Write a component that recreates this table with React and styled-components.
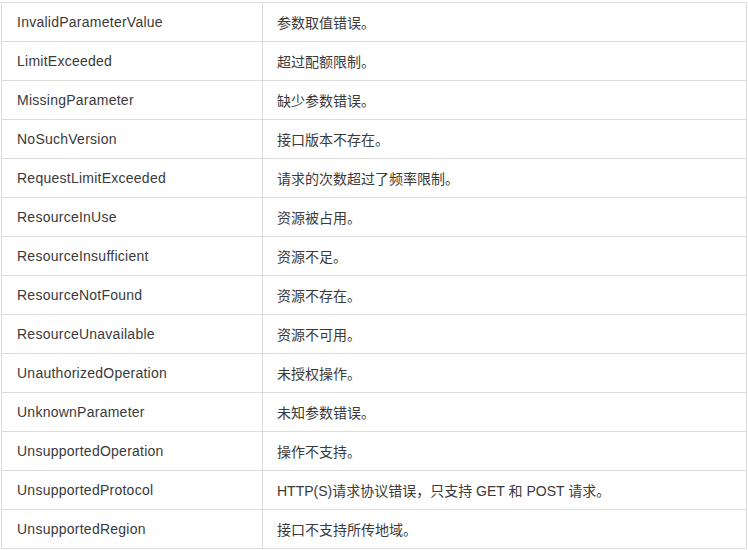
import React from "react";
import styled, { createGlobalStyle } from "styled-components";

const rows = [
  ["InvalidParameterValue", "参数取值错误。"],
  ["LimitExceeded", "超过配额限制。"],
  ["MissingParameter", "缺少参数错误。"],
  ["NoSuchVersion", "接口版本不存在。"],
  ["RequestLimitExceeded", "请求的次数超过了频率限制。"],
  ["ResourceInUse", "资源被占用。"],
  ["ResourceInsufficient", "资源不足。"],
  ["ResourceNotFound", "资源不存在。"],
  ["ResourceUnavailable", "资源不可用。"],
  ["UnauthorizedOperation", "未授权操作。"],
  ["UnknownParameter", "未知参数错误。"],
  ["UnsupportedOperation", "操作不支持。"],
  ["UnsupportedProtocol", "HTTP(S)请求协议错误，只支持 GET 和 POST 请求。"],
  ["UnsupportedRegion", "接口不支持所传地域。"],
];

const GlobalStyle = createGlobalStyle`
  body {
    margin: 0;
    background: #fff;
    font-family: "Liberation Sans", Arial, "Noto Sans CJK SC", sans-serif;
  }
`;

const Wrapper = styled.div`
  padding: 2px 1px 0 1px;
`;

const Table = styled.table`
  width: 746px;
  border-collapse: collapse;
  table-layout: fixed;
  color: #3a3a3a;
  font-size: 14px;
`;

const Cell = styled.td`
  height: 38px;
  padding: 0 15px 0 ${(p) => (p.$first ? "15px" : "14px")};
  border: 1px solid #dcdcdc;
  vertical-align: middle;
  width: ${(p) => (p.$first ? "230px" : "auto")};
  letter-spacing: ${(p) => (p.$first ? "0.25px" : "0")};
  white-space: nowrap;
`;

function App() {
  return (
    <Wrapper>
      <GlobalStyle />
      <Table>
        <tbody>
          {rows.map(([code, desc]) => (
            <tr key={code}>
              <Cell $first>{code}</Cell>
              <Cell>{desc}</Cell>
            </tr>
          ))}
        </tbody>
      </Table>
    </Wrapper>
  );
}

export default App;
